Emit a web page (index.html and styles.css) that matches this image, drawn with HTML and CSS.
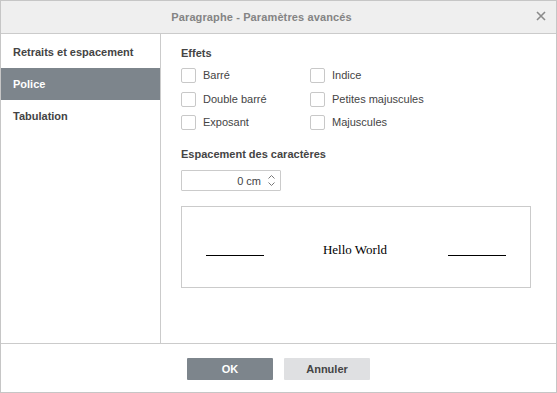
FILE: index.html
```html
<!DOCTYPE html>
<html>
<head>
<meta charset="utf-8">
<link rel="stylesheet" href="styles.css">
</head>
<body>
<div class="dialog">
  <div class="header">
    <span class="title">Paragraphe - Paramètres avancés</span>
    <span class="close">
      <svg width="10" height="10" viewBox="0 0 10 10"><path d="M1 1 L9 9 M9 1 L1 9" stroke="#8a8a8a" stroke-width="1.6" fill="none"/></svg>
    </span>
  </div>
  <div class="body">
    <div class="sidebar">
      <div class="item">Retraits et espacement</div>
      <div class="item active">Police</div>
      <div class="item">Tabulation</div>
    </div>
    <div class="content">
      <div class="label-header">Effets</div>
      <div class="checks">
        <label class="check"><span class="box"></span><span>Barré</span></label>
        <label class="check"><span class="box"></span><span>Indice</span></label>
        <label class="check"><span class="box"></span><span>Double barré</span></label>
        <label class="check"><span class="box"></span><span>Petites majuscules</span></label>
        <label class="check"><span class="box"></span><span>Exposant</span></label>
        <label class="check"><span class="box"></span><span>Majuscules</span></label>
      </div>
      <div class="label-header spacing">Espacement des caractères</div>
      <div class="spin">
        <span class="spin-value">0 cm</span>
        <span class="spin-arrows">
          <svg width="7" height="4" viewBox="0 0 7 4"><path d="M0.5 3.5 L3.5 0.5 L6.5 3.5" stroke="#777" stroke-width="1" fill="none"/></svg>
          <svg width="7" height="4" viewBox="0 0 7 4"><path d="M0.5 0.5 L3.5 3.5 L6.5 0.5" stroke="#777" stroke-width="1" fill="none"/></svg>
        </span>
      </div>
      <div class="preview">
        <div class="preview-row">
          <span class="pline"></span>
          <span class="ptext">Hello World</span>
          <span class="pline"></span>
        </div>
      </div>
    </div>
  </div>
  <div class="footer">
    <button class="btn primary">OK</button>
    <button class="btn">Annuler</button>
  </div>
</div>
</body>
</html>
```
FILE: styles.css
```css
html, body {
  margin: 0;
  padding: 0;
  background: #ffffff;
}
.dialog {
  width: 557px;
  height: 393px;
  box-sizing: border-box;
  border: 1px solid #c6c6c6;
  display: flex;
  flex-direction: column;
  font-family: "Liberation Sans", Arial, sans-serif;
  font-size: 11px;
  color: #444444;
  background: #ffffff;
}
.header {
  height: 32px;
  flex: none;
  background: #efefef;
  border-bottom: 1px solid #cbcbcb;
  display: flex;
  align-items: center;
  justify-content: center;
  padding-right: 34px;
  position: relative;
}
.title {
  font-weight: bold;
  font-size: 11px;
  color: #848484;
  letter-spacing: 0.12px;
}
.close {
  position: absolute;
  right: 10px;
  top: 10px;
  width: 10px;
  height: 10px;
  display: flex;
}
.body {
  flex: none;
  height: 309px;
  display: flex;
}
.sidebar {
  width: 159px;
  flex: none;
  border-right: 1px solid #cbcbcb;
  padding-top: 2px;
  box-sizing: content-box;
}
.item {
  height: 32px;
  line-height: 32px;
  padding-left: 12px;
  font-weight: bold;
  color: #444444;
}
.item.active {
  background: #7d858c;
  color: #ffffff;
}
.content {
  flex: 1;
  padding: 12px 0 0 20px;
}
.label-header {
  font-weight: bold;
  line-height: 14px;
  height: 14px;
}
.checks {
  margin-top: 8px;
  display: grid;
  grid-template-columns: 129px auto;
  row-gap: 8.5px;
}
.check {
  display: flex;
  align-items: center;
  height: 15px;
  line-height: 15px;
}
.box {
  width: 13px;
  height: 13px;
  border: 1px solid #c8c8c8;
  border-radius: 2px;
  background: #ffffff;
  margin-right: 7px;
  flex: none;
}
.spacing {
  margin-top: 17px;
}
.spin {
  margin-top: 9px;
  width: 100px;
  height: 21px;
  box-sizing: border-box;
  border: 1px solid #cbcbcb;
  border-radius: 1px;
  display: flex;
  align-items: center;
  justify-content: flex-end;
}
.spin-value {
  color: #444444;
  margin-right: 3px;
}
.spin-arrows {
  width: 14px;
  display: flex;
  flex-direction: column;
  align-items: center;
  gap: 3px;
  margin-right: 2px;
}
.spin-arrows svg {
  display: block;
}
.preview {
  margin-top: 15px;
  width: 350px;
  height: 82px;
  box-sizing: border-box;
  border: 1px solid #cbcbcb;
  padding: 35px 24px 0 24px;
}
.preview-row {
  display: flex;
  align-items: flex-start;
  justify-content: space-between;
  line-height: 16px;
  height: 16px;
}
.pline {
  display: block;
  width: 58px;
  height: 0;
  margin-top: 13px;
  border-bottom: 1px solid #000000;
}
.ptext {
  font-family: "Liberation Serif", "Times New Roman", serif;
  font-size: 13px;
  color: #000000;
  margin-left: -2px;
}
.footer {
  flex: 1;
  border-top: 1px solid #cbcbcb;
  display: flex;
  justify-content: center;
  align-items: flex-start;
  padding-top: 14px;
  gap: 11px;
}
.btn {
  width: 86px;
  height: 22px;
  border: none;
  border-radius: 1px;
  background: #dfe0e2;
  color: #444444;
  font-family: "Liberation Sans", Arial, sans-serif;
  font-size: 11px;
  font-weight: bold;
  padding: 0;
}
.btn.primary {
  background: #7d858c;
  color: #ffffff;
}
```
